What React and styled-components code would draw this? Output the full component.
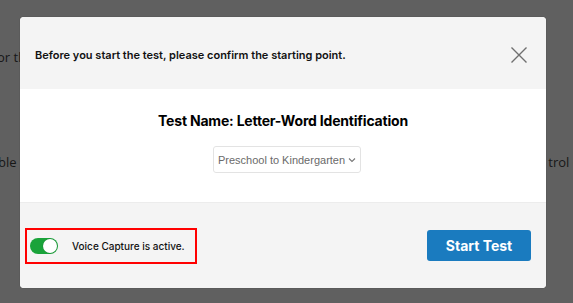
import React from "react"
import styled, { createGlobalStyle } from "styled-components"

const GlobalStyle = createGlobalStyle`
    html, body {
        margin: 0;
        padding: 0;
        width: 100%;
        height: 100%;
        overflow: hidden;
    }
    body {
        font-family: Inter, "Liberation Sans", sans-serif;
        background: #606060;
    }
`

const Page = styled.div`
    width: 573px;
    height: 303px;
    background: #606060;
    position: relative;
    display: flex;
    flex-direction: column;
    overflow: hidden;
`

const BackLine = styled.div`
    display: flex;
    justify-content: space-between;
    height: 18px;
    margin-top: ${(p) => p.$top}px;
    white-space: nowrap;
    font-family: "Open Sans", "Liberation Sans", sans-serif;
    font-size: 13px;
    color: #171717;
`

const Overlay = styled.div`
    position: absolute;
    inset: 0;
    display: flex;
    align-items: flex-start;
    padding: 17px 0 0 20px;
`

const Modal = styled.div`
    width: 526px;
    height: 271px;
    border-radius: 4px;
    overflow: hidden;
    display: flex;
    flex-direction: column;
    background: #fff;
    font-family: Inter, "Liberation Sans", sans-serif;
    box-shadow: 0 0 0 1px rgba(0, 0, 0, 0.05);
`

const Header = styled.div`
    height: 72px;
    background: #f4f4f4;
    display: flex;
    align-items: center;
    justify-content: space-between;
    padding: 4px 18px 0 15px;
    box-sizing: border-box;
`

const HeaderText = styled.div`
    font-size: 11px;
    font-weight: 600;
    color: #111;
`

const CloseButton = styled.button`
    border: none;
    background: none;
    padding: 0;
    width: 18px;
    height: 16px;
    display: flex;
    cursor: pointer;
`

const Body = styled.div`
    height: 113px;
    display: flex;
    flex-direction: column;
    align-items: center;
    padding-top: 23px;
    box-sizing: border-box;
`

const Title = styled.div`
    font-size: 14px;
    font-weight: 700;
    color: #000;
    letter-spacing: -0.2px;
`

const Select = styled.div`
    margin: 17px 0 0 8px;
    height: 27px;
    padding: 0 4px 0 4px;
    border: 1px solid #e3e3e3;
    border-radius: 3px;
    display: flex;
    align-items: center;
    gap: 3px;
    font-family: "Liberation Sans", Arial, sans-serif;
    font-size: 11px;
    color: #6a6a6a;
    box-sizing: border-box;
`

const Footer = styled.div`
    flex: 1;
    background: #f4f4f4;
    border-top: 1px solid #ececec;
    display: flex;
    align-items: center;
    justify-content: space-between;
    padding: 0 15px 0 5px;
`

const VoiceBox = styled.div`
    width: 172px;
    height: 36px;
    border: 2px solid #ff0000;
    box-sizing: border-box;
    display: flex;
    align-items: center;
    padding-left: 3px;
    gap: 14px;
`

const Toggle = styled.div`
    width: 28px;
    height: 16px;
    border-radius: 8px;
    background: ${(p) => (p.$on ? "#1aa33a" : "#ccc")};
    display: flex;
    align-items: center;
    justify-content: ${(p) => (p.$on ? "flex-end" : "flex-start")};
    padding: 0 1px;
    box-sizing: border-box;
    flex-shrink: 0;
`

const Knob = styled.div`
    width: 14px;
    height: 14px;
    border-radius: 50%;
    background: #fff;
    box-shadow: 0 0 0 0.5px rgba(0, 0, 0, 0.15);
`

const VoiceText = styled.span`
    font-size: 10px;
    font-weight: 500;
    color: #111;
    white-space: nowrap;
`

const StartButton = styled.button`
    width: 104px;
    height: 31px;
    border: none;
    border-radius: 3px;
    background: #1a7bbf;
    color: #fff;
    font-family: Inter, "Liberation Sans", sans-serif;
    font-size: 14px;
    font-weight: 700;
    cursor: pointer;
`

export default function App() {
    return (
        <>
            <GlobalStyle />
            <Page>
                <BackLine $top={48}>
                    <span style={{ marginLeft: -3 }}>or th</span>
                </BackLine>
                <BackLine $top={87}>
                    <span style={{ marginLeft: -2 }}>ble t</span>
                    <span style={{ marginRight: -6 }}>trol c</span>
                </BackLine>
                <Overlay>
                    <Modal>
                        <Header>
                            <HeaderText>Before you start the test, please confirm the starting point.</HeaderText>
                            <CloseButton aria-label="Close">
                                <svg width="18" height="16" viewBox="0 0 18 16">
                                    <path d="M1.5 0.5 L16.5 15.5 M16.5 0.5 L1.5 15.5" stroke="#6f6f6f" strokeWidth="1.4" fill="none" />
                                </svg>
                            </CloseButton>
                        </Header>
                        <Body>
                            <Title>Test Name: Letter-Word Identification</Title>
                            <Select>
                                Preschool to Kindergarten
                                <svg width="8" height="6" viewBox="0 0 8 6">
                                    <path d="M1 1.5 L4 4.5 L7 1.5" stroke="#777" strokeWidth="1.1" fill="none" />
                                </svg>
                            </Select>
                        </Body>
                        <Footer>
                            <VoiceBox>
                                <Toggle $on>
                                    <Knob />
                                </Toggle>
                                <VoiceText>Voice Capture is active.</VoiceText>
                            </VoiceBox>
                            <StartButton>Start Test</StartButton>
                        </Footer>
                    </Modal>
                </Overlay>
            </Page>
        </>
    )
}
